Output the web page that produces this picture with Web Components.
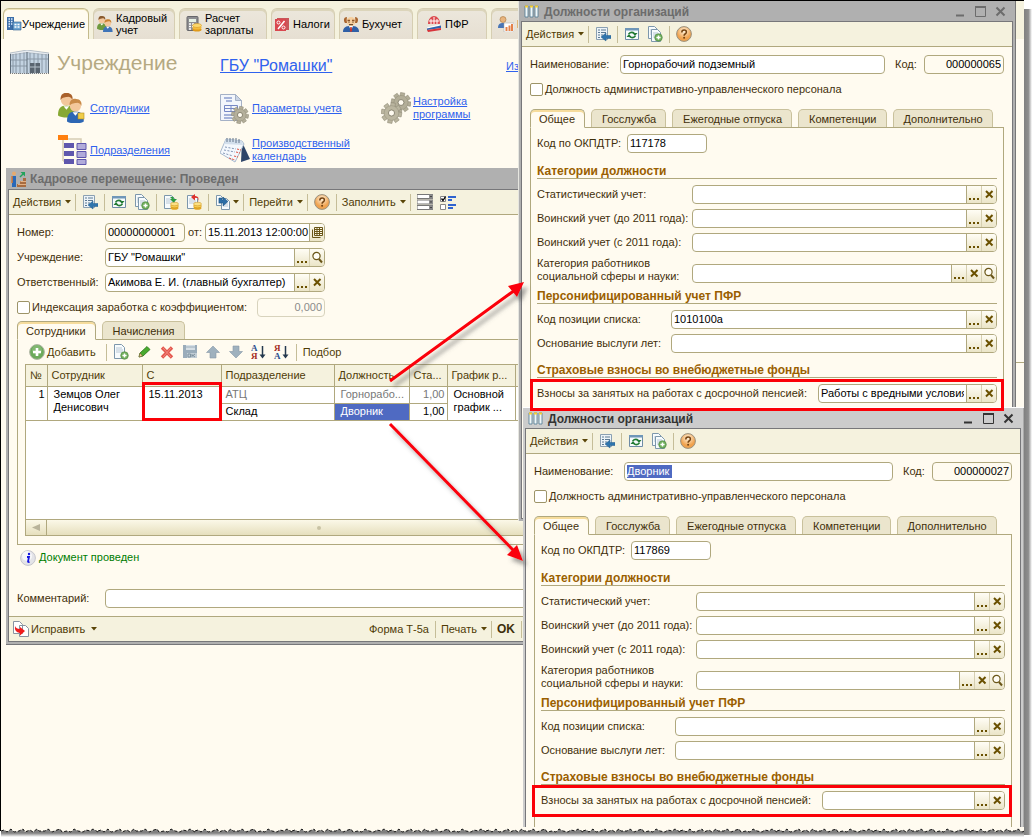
<!DOCTYPE html>
<html lang="ru">
<head>
<meta charset="utf-8">
<title>Кадровое перемещение</title>
<style>
  body { margin: 0; background: #fff; font: 11px/13px "Liberation Sans", Arial, sans-serif; color: #3f2f0a; }
</style>
</head>
<body>
<hr-desktop></hr-desktop>
<script>
const define = (name, css, render, ready) => customElements.define(name, class extends HTMLElement {
  constructor() { super(); this.attachShadow({ mode: 'open' }); }
  connectedCallback() {
    if (this.shadowRoot.firstChild) return;
    const a = (n, d = '') => this.getAttribute(n) ?? d;
    const t = document.createElement('template');
    t.innerHTML = `<style>*{box-sizing:border-box}[hidden]{display:none}${css}</style>${render(a, this)}`;
    this.shadowRoot.append(t.content.cloneNode(true));
    if (ready) ready(this.shadowRoot, this);
  }
});

const gear = (cx, cy, r, fill) => {
  let teeth = '';
  for (let i = 0; i < 8; i++) teeth += `<rect x="${cx - r * .22}" y="${cy - r}" width="${r * .44}" height="${r * .5}" transform="rotate(${i * 45 + 10} ${cx} ${cy})"/>`;
  return `<g fill="${fill}" stroke="#8b8672" stroke-width=".5">${teeth}</g><circle cx="${cx}" cy="${cy}" r="${r * .72}" fill="${fill}" stroke="#8b8672" stroke-width=".4"/><circle cx="${cx}" cy="${cy}" r="${r * .3}" fill="#fffbf0" stroke="#77725f" stroke-width=".8"/>`;
};
const person = (x, y, s, hair, body) => `<g transform="translate(${x} ${y}) scale(${s})"><path d="M0 16c0-5 2-7 6-7s6 2 6 7c-3 2-9 2-12 0z" fill="${body}"/><path d="M4 9.500l2 2.500 2-2.500z" fill="#fff"/><circle cx="6" cy="5" r="4" fill="#f3c79b"/><path d="M1.800 5C1.500 1 4-.5 6.500 0c3 0 4.500 2.500 3.700 5-.6-1.500-1.700-2.300-3-2.300-1.800.4-4 .3-5.400 2.300z" fill="${hair}"/></g>`;
const doc = (x, y, w = 9, h = 12) => `<path d="M${x + .5} ${y + .5}h${w - 3}l3 3v${h - 3}h-${w}z" fill="#f7fbfd" stroke="#7d97ac"/><path d="M${x + 2} ${y + 4}h${w - 4}M${x + 2} ${y + 6}h${w - 3}M${x + 2} ${y + 8}h${w - 3}" stroke="#a9bccb" stroke-width=".8"/>`;
const coins = '<ellipse cx="11.500" cy="14" rx="4" ry="1.800" fill="#e2a623"/><ellipse cx="11.500" cy="12" rx="4" ry="1.800" fill="#f7cf55" stroke="#c98d16" stroke-width=".5"/><ellipse cx="11.500" cy="10" rx="4" ry="1.800" fill="#fbe084" stroke="#c98d16" stroke-width=".5"/>';
const plus = (x, y, r) => `<circle cx="${x}" cy="${y}" r="${r}" fill="#6fae5b" stroke="#4c8440" stroke-width=".6"/><path d="M${x - r * .55} ${y}h${r * 1.1}M${x} ${y - r * .55}v${r * 1.1}" stroke="#fff" stroke-width="${r * .4}"/>`;
const azIcon = (top, bottom, c1, c2) => `<text x="0" y="8" font-size="9" font-weight="bold" font-family="Liberation Serif" fill="${c1}">${top}</text><text x="0" y="16" font-size="9" font-weight="bold" font-family="Liberation Serif" fill="${c2}">${bottom}</text><path d="M11.500 3v10" stroke="#25394f" stroke-width="1.500"/><path d="M8.500 11.500h6l-3 4z" fill="#25394f"/>`;

const ICONS = {
  office: [16, 16, '<path d="M1 1h7v13H1z" fill="#3c6ea8"/><path d="M2.500 3h1.500M5 3h1.500M2.500 5.500h1.500M5 5.500h1.500M2.500 8h1.500M5 8h1.500M2.500 10.500h1.500" stroke="#dff0ff" stroke-width="1.300"/><path d="M7 6h8v8H7z" fill="#6fa6d2" stroke="#2e5c8e" stroke-width=".6"/><path d="M8.500 8.500h2M11.500 8.500h2M8.500 11h2M11.500 11h2" stroke="#fff" stroke-width="1.300"/>'],
  people: [16, 16, person(0, 0, .8, '#8a5a2e', '#6f9a3e') + person(6, 3.2, .8, '#c97f2c', '#3f74b8')],
  calc: [16, 16, '<rect x="1" y=".5" width="11" height="14" rx="1" fill="#8e8e92" stroke="#66666a"/><path d="M3 3h7v3H3z" fill="#e5f1e4"/><path d="M3 8h2M6 8h2M3 10.500h2M6 10.500h2M3 13h2" stroke="#fff" stroke-width="1.300"/><ellipse cx="11" cy="13.500" rx="4.500" ry="2" fill="#e09a1a"/><ellipse cx="11" cy="11.500" rx="4.500" ry="2" fill="#f5bc3a"/><ellipse cx="11" cy="9.500" rx="4.500" ry="2" fill="#fbd86e" stroke="#d18f16" stroke-width=".5"/>'],
  percent: [16, 16, '<rect x="3" y="2" width="12" height="12" fill="#c9565a"/><rect x="1" y="3" width="11" height="12" fill="#d9484f"/><path d="M10.500 5L4 13" stroke="#fff" stroke-width="1.500"/><circle cx="4.500" cy="6.500" r="1.500" fill="none" stroke="#fff"/><circle cx="9.500" cy="11.500" r="1.500" fill="none" stroke="#fff"/>'],
  accountant: [16, 16, '<path d="M0 16c0-5 3-6 8-6s8 1 8 6z" fill="#2f5fa6"/><path d="M6 10l2 5 2-5z" fill="#fff"/><path d="M7.300 11h1.400l.5 4-1.200 1-1.200-1z" fill="#c8342b"/><circle cx="8" cy="5.500" r="4.500" fill="#f6cf9f"/><path d="M2 7c-2-3-1-6 2-6-.5 2-.5 4 0 6zM14 7c2-3 1-6-2-6 .5 2 .5 4 0 6z" fill="#a8642e"/><path d="M4.500 4.500h2.500M9 4.500h2.500" stroke="#8c542a" stroke-width="1.300"/><path d="M5.500 6.200h1M9.500 6.200h1M6 8.700h4" stroke="#4a2c14" stroke-width="1" fill="none"/>'],
  pfr: [16, 16, '<path d="M2 8c0-5 3-8 6-8s6 3 6 8z" fill="#dc4a4f"/><path d="M8 1v7M5 3v5M11 3v5M3 5h10" stroke="#fff" stroke-width="1"/><path d="M1 11l13-3v2L1 13z" fill="#fff" stroke="#d5d5d5" stroke-width=".4"/><path d="M1 12.500l14-3v2.500L1 14z" fill="#2f62ad"/><path d="M1 14l14-2v2L2 16z" fill="#d8333a"/>'],
  report: [16, 16, '<circle cx="5" cy="3.500" r="3" fill="#e8b47e" stroke="#a8763e" stroke-width=".6"/><path d="M0 12c0-4 2-5 5-5s5 1 5 5z" fill="#4a76b6"/><path d="M6 7h10v9H6z" fill="#fff" stroke="#a7a7a7" stroke-width=".5"/><path d="M7.500 11h2v4h-2zM10.500 9.500h2V15h-2zM13 8h2v7h-2z" fill="#e5824b"/>'],
  building: [39, 26, '<path d="M0 3L17 0v24L0 23zM17 0l22 3v20l-22 1z" fill="#c3d3e2"/><path d="M0 3L17 0l22 3v2L17 2.500 0 5z" fill="#e9edf1" stroke="#8d99a5" stroke-width=".5"/><path d="M3 4v19M6 3.500v20M10 3v21M14 2.500V23M20 3v20M24 3v10M28 3.500V13M32 4v19M36 4v19M0 10h17M0 16h17M17 9h22" stroke="#8a98a6" stroke-width="1"/><path d="M17 2v22M38.500 4v19M.5 4v19" stroke="#5f6c79"/><path d="M20 13h10v10H20z" fill="#596470"/><path d="M25 13v10M20 17h10" stroke="#b5c0ca"/><path d="M0 23.500h39" stroke="#7c7c7c" stroke-dasharray="1 1"/>'],
  staff: [28, 30, person(0, 0, 1.4, '#a9602a', '#87a833') + person(9, 6, 1.4, '#c98a48', '#2c66b4') + '<rect x="20" y="20" width="6" height="6" fill="#f0cd48" stroke="#b38d1e" stroke-width=".6"/>'],
  tree: [30, 30, '<path d="M10 4h13v6M5 5v21M5 12h4M5 19h4M5 26h4" fill="none" stroke="#d6cdb4" stroke-width="1.500"/><path d="M0 0h10v5H0z" fill="#ff7f0e"/><path d="M6 8h10v5H6zM6 16h10v5H6zM6 24h10v5H6z" fill="#5f57ad"/><path d="M19 8.500h9v6h-9zM19 16.500h9v6h-9zM19 24.500h9v5h-9z" fill="#b1abda" stroke="#5f57ad"/>'],
  params: [29, 31, '<path d="M.5 1.500h15l6 6v20H.5z" fill="#f3f6fb" stroke="#a5b1c6"/><path d="M15.500 1.500v6h6z" fill="#cbd5e5" stroke="#a5b1c6"/><path d="M4 5h8M6 8h6M4 22h10M4 25h8" stroke="#8d9ed0" stroke-width="1.300"/><path d="M4.500 12.500h13v6h-13zM4.500 15.500h13M11 12.500v6" fill="none" stroke="#7688c5"/>' + gear(20, 22, 8.5, '#b5b09c')],
  calendar: [30, 26, '<path d="M22 5l8 17-9 3z" fill="#2e4568"/><path d="M6 2l16 2 2 3-9 18L0 16z" fill="#f4f8fd" stroke="#a9bacd"/><path d="M6 2l16 2 1 4L4 7z" fill="#d3dfec"/><path d="M7 1v4M10 1v4M13 1v4M16 1v5M19 2v4" stroke="#62748a"/><path d="M5 10l11 2M4 13l11 2M3 16l10 3" stroke="#8497b6" stroke-dasharray="2 1.500"/><path d="M17 12l4 1M16 15l4 1M14 19l4 1M9 21l6 2" stroke="#e1503e" stroke-dasharray="2 1"/>'],
  gears: [30, 32, gear(20, 10.5, 9.8, '#b3ae98') + gear(10.5, 21, 10.2, '#bbb6a0')],
  move: [16, 16, '<circle cx="3" cy="2.500" r="2" fill="#e7aa6e"/><path d="M1 5h4v11H1z" fill="#2868b8"/><path d="M1 5v7" stroke="#d87c37" stroke-width="1.500"/><path d="M6 16v-3h3v-3h3V7h3v9z" fill="#a86c40"/><path d="M7 13.500h8M9.500 10.500H15" stroke="#e2b185"/><path d="M9 6l3-3" stroke="#21a35b" stroke-width="1.500"/><path d="M9.500 1H14v4.500z" fill="#21a35b"/>'],
  catalog: [17, 13, '<path d="M1 1h3v11H1zM6 1h3v11H6zM11 1h3v11h-3z" fill="#f1f7f8" stroke="#4f7a93" stroke-width=".8"/><path d="M1 .5h3v2H1zM6 .5h3v2H6zM11 .5h3v2h-3z" fill="#f5ce34"/>'],
  goto: [16, 16, '<path d="M1.500 1.500h11v12h-11z" fill="#edf4f8" stroke="#8aa0b2"/><path d="M3 4h2M6 4h5M3 6.500h2M6 6.500h5M3 9h2M6 9h2M3 11.500h2" stroke="#5c7a93"/><path d="M16 9.500h-5V7l-5 4 5 4v-2.500h5z" fill="#2f75ad" stroke="#225d8e" stroke-width=".5"/>'],
  refresh: [16, 16, '<path d="M1.500 2.500h13v11h-13z" fill="#f6fafc" stroke="#6e8ba5"/><path d="M1 2h14v2.500H1z" fill="#6f96b8"/><path d="M4.500 8q3-3 6-.5M11.500 10q-3 3-6 .5" fill="none" stroke="#237b35" stroke-width="1.500"/><path d="M13.500 7l-2.500 3-2.500-3zM2.500 11L5 8l2.500 3z" fill="#237b35"/>'],
  copy: [16, 16, doc(1, 0) + doc(4, 3, 9, 12) + plus(11.5, 11.5, 3.8)],
  newdoc: [16, 16, doc(1, 0, 10, 14) + plus(11.5, 11.5, 3.8)],
  post: [16, 16, doc(1, 1, 10, 13) + coins + '<path d="M7 3q4-1 4 2h3L10.500 8.500 7 5h2z" fill="#2a9a3d"/>'],
  unpost: [16, 16, doc(1, 1, 10, 13) + coins + '<path d="M12 8q1-5-3-4v2.500L5 3l4-3v2q5 0 3 6z" fill="#e0312a"/>'],
  based: [16, 16, doc(1, 1, 7, 10) + doc(6, 4, 8, 11) + '<path d="M4 4v5h4v3l5-4.500L8 3v3H7V4z" fill="#2d6ea6" stroke="#174c7d" stroke-width=".5"/>'],
  help: [16, 16, '<defs><radialGradient id="g" cy=".3"><stop offset="0" stop-color="#fff3dd"/><stop offset="1" stop-color="#f0a24e"/></radialGradient></defs><circle cx="8" cy="8" r="7.400" fill="url(#g)" stroke="#99917f"/><path d="M5.800 6.500q0-2.500 2.300-2.500t2.300 2q0 1.200-1.300 2-1 .6-1 1.700" fill="none" stroke="#744312" stroke-width="1.500"/><circle cx="8.100" cy="11.800" r="1" fill="#744312"/>'],
  rows: [16, 16, '<path d="M0 .5h16v4H0zM0 6h16v4H0zM0 11.500h16v4H0z" fill="#fff" stroke="#777"/><path d="M12 .5h4v4h-4zM12 6h4v4h-4zM12 11.500h4v4h-4z" fill="#8d8d8d"/><path d="M13 2h2l-1 1.500zM13 7.500h2L14 9zM13 13h2l-1 1.500z" fill="#222"/>'],
  checks: [16, 16, '<path d="M.5 2.500h5v5h-5zM.5 10.500h5v5h-5z" fill="#fff" stroke="#888"/><path d="M1.500 4.500L3 6.500l2.500-4" fill="none" stroke="#000" stroke-width="1.300"/><path d="M8 3h8M8 6h4M8 11h8M8 14h5" stroke="#2f63cf" stroke-width="2"/>'],
  add: [16, 16, '<circle cx="8" cy="8" r="7.400" fill="#6caa5c" stroke="#b0b6a5"/><circle cx="8" cy="6" r="5" fill="#8fc27f" opacity=".6"/><path d="M4 8h8M8 4v8" stroke="#fff" stroke-width="2.600"/>'],
  pencil: [16, 16, '<path d="M3 13l1-4 7-6.500 3 3L7 12z" fill="#4aab2f" stroke="#27721a" stroke-width=".8"/><path d="M3 13l1-4 2.500 3z" fill="#f1cf95" stroke="#664a22" stroke-width=".5"/>'],
  remove: [16, 16, '<path d="M3 3.500l10 10M13 3.500l-10 10" stroke="#e4574e" stroke-width="3.400"/><path d="M4 4l8 9M12 4l-8 9" stroke="#f08b80" stroke-width="1"/>'],
  save: [16, 16, '<path d="M1 1h14v13H1z" fill="#9aacba"/><path d="M4 1h9v5H4z" fill="#d6dfe5"/><path d="M4 3h9" stroke="#9aacba"/><path d="M5 9h10v5H5z" fill="#c2ced6"/><path d="M6 10h2.500v3H6zM10 10v3M10 11.500h1l2-1.500M11 11.500l2 1.500" fill="none" stroke="#7f929f"/>'],
  up: [16, 16, '<path d="M8 2l6.500 6.500H11V14H5V8.500H1.500z" fill="#9fb1be" stroke="#8799a7" stroke-width=".6"/>'],
  down: [16, 16, '<path d="M8 14L1.500 7.500H5V2h6v5.500h3.500z" fill="#9fb1be" stroke="#8799a7" stroke-width=".6"/>'],
  az: [16, 18, azIcon('А', 'Я', '#2b4f8e', '#a52a22')],
  za: [16, 18, azIcon('Я', 'А', '#a52a22', '#2b4f8e')],
  info: [16, 16, '<circle cx="8" cy="8" r="7.400" fill="#e4e4e8" stroke="#c6c6cc"/><circle cx="7" cy="6" r="5" fill="#fff" opacity=".7"/><path d="M7 7h2l-1 4.500q0 .8 1.500.3" fill="none" stroke="#1515e0" stroke-width="1.800"/><circle cx="9" cy="4" r="1.200" fill="#1515e0"/>'],
  fix: [16, 16, '<path d="M.5.500h6l3 3v9h-9zM6.500 4.500h6l3 3v8h-9z" fill="#fff" stroke="#8893a0"/><path d="M2 5q1 3 5 3V6l5 4-5 4.500V12Q1 11 2 5z" fill="#f01c1c"/>'],
  find: [15, 17, '<circle cx="6.500" cy="7" r="3.600" fill="#fffdf5" stroke="#6a5618" stroke-width="1.200"/><path d="M9 10l3 3.500" stroke="#6a5618" stroke-width="2"/>'],
  cross: [15, 17, '<path d="M4 5l6.500 6.500M10.500 5L4 11.500" stroke="#6a5000" stroke-width="2"/>'],
  dots: [15, 17, '<path d="M2 12h2v2H2zM6 12h2v2H6zM10 12h2v2h-2z" fill="#6a5000"/>'],
  date: [15, 17, '<path d="M4.500 3.500h8v8h-8zM4.500 5.500h8M4.500 7.500h8M4.500 9.500h8M7 3.500v8M9.500 3.500v8" fill="#fffbe8" stroke="#6a5618"/><path d="M2.500 5.500v8h8" fill="none" stroke="#6a5618"/>'],
  min: [12, 12, '<path d="M1 9.500h8" stroke="currentColor" stroke-width="2"/>'],
  max: [12, 12, '<path d="M.5 1h10v9.500H.500z" fill="none" stroke="currentColor"/><path d="M0 1h11" stroke="currentColor" stroke-width="2"/>'],
  close: [12, 12, '<path d="M1.500 1.500l8 8M9.500 1.500l-8 8" stroke="currentColor" stroke-width="2"/>'],
  caret: [7, 4, '<path d="M0 0h6L3 3.500z" fill="#5a4508"/>']
};
define('ui-icon', ':host{display:inline-flex;flex:none}svg{display:block}', a => {
  const [w, h, body] = ICONS[a('name')];
  return `<svg width="${w}" height="${h}" viewBox="0 0 ${w} ${h}" aria-hidden="true">${body}</svg>`;
});

define('main-tab', `
  :host{display:block;flex:none}
  button{width:100%;height:31px;display:flex;align-items:center;gap:3px;padding:0 0 0 var(--pad,3px);border:1px solid #d6ceb2;border-bottom:0;border-radius:6px 6px 0 0;
    background:linear-gradient(#ece7dc,#e6dfd2);font:inherit;line-height:12px;color:#000;text-align:left;box-shadow:inset 0 2px #dcd5bb}
  :host([active]) button{background:#fffbf0;border-color:#c4ba8c;gap:0;box-shadow:inset 0 1px #efe4b8}`,
  a => `<button type="button"><ui-icon name="${a('icon')}"></ui-icon><span><slot></slot></span></button>`);

define('main-tabs', `
  :host{display:flex;gap:4px;height:38px;padding:7px 0 0 2px;background:#f5f2de;overflow:hidden}
  .t1{width:86px;--pad:2px}.t2{width:82px}.t3{width:88px;--pad:6px}.t4{width:64px;--pad:2px}.t5{width:74px}.t6{width:70px;--pad:8px}.t7{width:86px;--pad:6px}`,
  () => `<main-tab class="t1" icon="office" active>Учреждение</main-tab><main-tab class="t2" icon="people">Кадровый<br>учет</main-tab>
  <main-tab class="t3" icon="calc">Расчет<br>зарплаты</main-tab><main-tab class="t4" icon="percent">Налоги</main-tab>
  <main-tab class="t5" icon="accountant">Бухучет</main-tab><main-tab class="t6" icon="pfr">ПФР</main-tab><main-tab class="t7" icon="report">К</main-tab>`);

define('nav-item', `
  :host{display:flex;align-items:center}
  .pic{width:32px;display:flex;flex:none}
  a{color:#2f62ee;text-decoration:underline}`,
  a => `<span class="pic"><ui-icon name="${a('icon')}"></ui-icon></span><a href="#"><slot></slot></a>`);

define('home-page', `
  :host{display:block}
  header{display:flex;align-items:center;padding:0 0 0 9px;height:48px}
  h1{margin:0 0 0 8px;width:163px;font-size:21px;line-height:24px;font-weight:400;color:#b5a982}
  header a{color:#2f62ee}
  .org{font-size:16px;line-height:18px;width:286px;margin-top:6px}
  .more{margin-top:6px}
  nav{display:grid;grid-template-columns:162px 161px 120px;grid-auto-rows:42px;padding:0 0 0 57px}`,
  () => `<header><ui-icon name="building"></ui-icon><h1>Учреждение</h1><a class="org" href="#">ГБУ "Ромашки"</a><a class="more" href="#">Из</a></header>
  <nav><nav-item icon="staff">Сотрудники</nav-item><nav-item icon="params">Параметры учета</nav-item><nav-item icon="gears">Настройка<br>программы</nav-item>
  <nav-item icon="tree">Подразделения</nav-item><nav-item icon="calendar">Производственный<br>календарь</nav-item></nav>`);

define('app-window', `
  :host{display:flex;flex-direction:column;background:#b0b0b0;border-right:1px solid #777;--title:#6c6c6c;color:#3f2f0a}
  :host([active]){background:#ccc;--title:#333;border-right-color:#aaa}
  .title{display:flex;align-items:center;gap:3px;height:var(--title-height,20px);flex:none;padding:1px 8px 0 5px;color:var(--title);font-weight:700}
  h2{flex:1;margin:0;font-size:12px;line-height:14px;white-space:nowrap}
  .ctl{display:flex;gap:8px}
  .ctl button{border:0;background:none;padding:0;color:inherit;display:flex;width:12px}
  .frame{flex:1;display:flex;flex-direction:column;margin:0 2px 2px;border:1px solid #77777a;background:#fffbf0;min-height:0}
  .body{flex:1;min-height:0}`,
  a => `<div class="title"><ui-icon name="${a('icon')}"></ui-icon><h2>${a('heading')}</h2><div class="ctl">
    <button type="button" aria-label="Свернуть"><ui-icon name="min"></ui-icon></button><button type="button" aria-label="Развернуть"><ui-icon name="max"></ui-icon></button><button type="button" aria-label="Закрыть"><ui-icon name="close"></ui-icon></button></div></div>
  <div class="frame"><slot name="bar"></slot><div class="body"><slot></slot></div><slot name="foot"></slot></div>`);

define('tool-bar', `
  :host{display:flex;align-items:center;height:25px;flex:none;padding-left:4px;background:#f5f2de;border-bottom:1px solid #b0a87e}
  :host([plain]){background:none;border:0;height:24px;padding-left:0}
  :host([foot]){border-bottom:0;border-top:1px solid #b0a87e;padding-left:0}`, () => '<slot></slot>');
define('tool-sep', ':host{display:block;flex:none;width:1px;height:17px;margin:0 2px 0 3px;background:#c5bd98}', () => '');
define('tool-button', `
  :host{display:block;flex:none}
  button{display:flex;align-items:center;height:22px;padding:0;border:0;background:none;font:inherit;color:#4f3b06;white-space:nowrap}
  :host([icon]) button{min-width:23px;padding:0 3px 0 4px;gap:2px}
  ui-icon[name=caret]{margin-left:4px}
  :host([hint][menu]) button{padding-right:0;gap:2px}
  :host([hint]) ui-icon[name=caret]{margin-left:0}
  :host([bold]) button{font-size:12px;font-weight:700;color:#3f2f0a}`,
  a => `<button type="button" aria-label="${a('hint')}">${a('icon') ? `<ui-icon name="${a('icon')}"></ui-icon>` : ''}<slot></slot>${a('menu', null) !== null ? '<ui-icon name="caret"></ui-icon>' : ''}</button>`,
  (root, el) => { if (!el.hasAttribute('hint')) root.querySelector('button').removeAttribute('aria-label'); });

define('form-field', `
  :host{display:flex;align-items:center;min-width:0}
  :host([tall]){align-items:flex-end}
  label{flex:none;width:var(--label,auto)}
  .box{flex:1;min-width:0;display:flex;height:19px;border:1px solid #b0a87e;border-radius:4px;background:#fff;overflow:hidden}
  input{flex:1;min-width:0;width:0;border:0;margin:0;padding:0 2px;background:transparent;font:inherit;color:#000;outline:0}
  :host([readonly]) .box{background:#fffbf0}
  :host([disabled]) .box{background:#fffbf0;border-color:#d8d3bd}
  :host([disabled]) input{color:#8b8b8b}
  :host([end]) input{text-align:right}
  :host([selected]) input{color:#fff;background:linear-gradient(#4f6ac2,#4f6ac2) 2px 2px/45px 13px no-repeat}
  :host([snug]) input{padding:0 0 0 2px}
  .box button{flex:none;width:15px;padding:0;border:0;border-left:1px solid #d6cfb0;background:linear-gradient(#fffdf5,#ebe5c8);display:flex;justify-content:center}
  .box button:first-of-type{border-left-color:#b0a87e}`,
  a => `<label for="f" ${a('label') ? '' : 'hidden'}>${a('label')}</label><div class="box"><input id="f" type="text" value='${a('value')}' ${a('label') ? '' : `aria-label="${a('hint', 'Значение')}"`} ${a('disabled', null) !== null ? 'disabled' : ''}>${a('buttons').split(' ').filter(Boolean).map(b => `<button type="button" aria-label="${{ dots: 'Выбрать', cross: 'Очистить', find: 'Открыть', date: 'Календарь' }[b]}"><ui-icon name="${b}"></ui-icon></button>`).join('')}</div>`);

define('check-field', `
  :host{display:flex;align-items:center;gap:2px}
  input{appearance:none;flex:none;width:13px;height:13px;margin:0;border:1px solid #9d9468;border-radius:2px;background:#fff}`,
  a => `<input type="checkbox" id="c"><label for="c">${a('label')}</label>`);

define('tab-panel', `
  :host{display:flex;flex-direction:column}
  .tabs{display:flex;gap:6px}
  button{height:19px;margin-bottom:-1px;padding:1px 9px 0;border:1px solid #c9c19c;border-bottom-color:#b0a87e;border-radius:5px 5px 0 0;background:#ebe5cd;font:inherit;color:#3f2f0a;white-space:nowrap}
  button:not(:first-child){padding-left:10px}
  button:first-child{background:#fffbf0;border-color:#b0a87e;border-bottom-color:#fffbf0;box-shadow:inset 0 2px #f6dc9c;z-index:1;padding:1px 9px 0 8px}
  .page{flex:1;border:1px solid #b0a87e}`,
  a => `<div class="tabs" role="tablist">${a('tabs').split('|').map(t => `<button type="button" role="tab">${t}</button>`).join('')}</div><div class="page" role="tabpanel"><slot></slot></div>`);

define('position-form', `
  :host{display:block;padding:8px 8px 0}
  .top{display:flex;gap:10px}
  .name{flex:1;--label:90px}.code{width:109px;--label:29px}
  check-field{margin:9px 0 13px}
  .page{padding:6px 6px 40px}
  .okpdtr{width:170px;--label:90px}
  h3{margin:11px 0 6px;height:15px;border-bottom:1px solid #b0a87e;font-size:12px;line-height:14px;font-weight:700;color:#9a5f00}
  h3.near{margin-top:6px}
  h3.last{margin-top:10px}
  .rows{display:flex;flex-direction:column;gap:5px;--label:155px}
  .rows.pfr{--label:134px}.rows.fund{--label:281px}`,
  a => `<div class="top"><form-field class="name" label="Наименование:" value="${a('name')}" ${a('marked', null) !== null ? 'selected' : ''}></form-field><form-field class="code" label="Код:" value="${a('code')}" readonly end></form-field></div>
  <check-field label="Должность административно-управленческого персонала"></check-field>
  <tab-panel tabs="Общее|Госслужба|Ежегодные отпуска|Компетенции|Дополнительно"><div class="page">
    <form-field class="okpdtr" label="Код по ОКПДТР:" value="${a('okpdtr')}"></form-field>
    <h3>Категории должности</h3>
    <div class="rows"><form-field label="Статистический учет:" buttons="dots cross"></form-field><form-field label="Воинский учет (до 2011 года):" buttons="dots cross"></form-field><form-field label="Воинский учет (с 2011 года):" buttons="dots cross"></form-field><form-field tall label="Категория работников социальной сферы и науки:" buttons="dots cross find"></form-field></div>
    <h3 class="near">Персонифицированный учет ПФР</h3>
    <div class="rows pfr"><form-field label="Код позиции списка:" value="${a('position')}" buttons="dots cross"></form-field><form-field label="Основание выслуги лет:" buttons="dots cross"></form-field></div>
    <h3 class="last">Страховые взносы во внебюджетные фонды</h3>
    <div class="rows fund"><form-field label="Взносы за занятых на работах с досрочной пенсией:" value="${a('fund')}" buttons="dots cross"></form-field></div>
  </div></tab-panel>`);

define('position-bar', ':host{display:block;flex:none}', () => `<tool-bar><tool-button menu>Действия</tool-button><tool-sep></tool-sep><tool-button icon="goto" hint="Перейти"></tool-button><tool-sep></tool-sep>
  <tool-button icon="refresh" hint="Обновить"></tool-button><tool-button icon="copy" hint="Копировать"></tool-button><tool-sep></tool-sep><tool-button icon="help" hint="Справка"></tool-button></tool-bar>`);

define('staff-table', `
  :host{display:flex;flex-direction:column;border:1px solid #b0a87e;background:#fff}
  .view{flex:1;overflow:hidden}
  table{border-collapse:collapse;table-layout:fixed;width:100%;color:#000}
  .c1{width:21px}.c2{width:95px}.c3{width:79px}.c4{width:113px}.c5{width:75px}.c6{width:38px}.c7{width:68px}
  th,td{border:1px solid #b0a87e;border-top:0;padding:1px 0 0 6px;height:17px;text-align:left;vertical-align:top;font-weight:400;white-space:nowrap;overflow:hidden}
  th{height:21px;padding:0 0 0 4px;vertical-align:middle;background:#f5f2de;color:#4f3b06}
  th:first-child,td.n{border-left:0}
  td.n,td.r{text-align:right;padding:1px 2px 0 0}
  td.u{padding-left:4px}
  .old{color:#777}
  .sel{background:#4f6ac2;color:#fff}
  .scroll{height:16px;display:flex;border-top:1px solid #b0a87e;background:linear-gradient(#fbf8e8,#e6dfbd)}
  .scroll button{width:21px;padding:0;border:0;border-right:1px solid #b0a87e;background:transparent;display:flex;align-items:center;justify-content:center}
  .thumb{flex:1;display:flex;align-items:center;justify-content:center;padding-left:4px}
  .thumb i{width:4px;height:4px;border-radius:2px;background:#c9c3a4}`,
  () => `<div class="view"><table><colgroup><col class="c1"><col class="c2"><col class="c3"><col class="c4"><col class="c5"><col class="c6"><col class="c7"><col></colgroup>
  <thead><tr><th>№</th><th>Сотрудник</th><th>С</th><th>Подразделение</th><th>Должность</th><th>Ста...</th><th>График р...</th><th></th></tr></thead>
  <tbody><tr><td class="n" rowspan="2">1</td><td rowspan="2">Земцов Олег<br>Денисович</td><td rowspan="2">15.11.2013</td><td class="old u">АТЦ</td><td class="old">Горнорабо...</td><td class="r old">1,00</td><td rowspan="2">Основной<br>график ...</td><td rowspan="2"></td></tr>
  <tr><td class="u">Склад</td><td class="sel">Дворник</td><td class="r">1,00</td></tr></tbody></table></div>
  <div class="scroll"><button type="button" aria-label="Влево"><svg width="8" height="8"><path d="M8 0v7L0 3.500z" fill="#b9b39a"/></svg></button><div class="thumb"><i></i></div></div>`);

define('movement-form', `
  :host{display:flex;flex-direction:column;height:100%;padding:8px 0 8px 8px;--label:88px}
  .rows{display:flex;flex-direction:column;gap:6px;width:308px}
  .line{display:flex;align-items:center;gap:3px}
  .num{width:168px}.when{flex:1;--label:0}
  .idx{justify-content:space-between}.idx form-field{width:68px}
  tab-panel{flex:1;margin-top:4px;min-height:0}
  .page{display:flex;flex-direction:column;height:203px;padding:0 0 7px 7px}
  staff-table{flex:1}
  .done{display:flex;align-items:center;gap:3px;margin:5px 0 24px 3px;color:#007d00;height:15px}
  .gap{width:4px}`,
  () => `<div class="rows"><div class="line"><form-field class="num" label="Номер:" value="00000000001" readonly></form-field><span>от:</span><form-field class="when" snug hint="Дата" value="15.11.2013 12:00:00" buttons="date"></form-field></div>
  <form-field label="Учреждение:" value='ГБУ &quot;Ромашки&quot;' buttons="dots find"></form-field>
  <form-field label="Ответственный:" value="Акимова Е. И. (главный бухгалтер)" buttons="dots cross"></form-field>
  <div class="line idx"><check-field label="Индексация заработка с коэффициентом:"></check-field><form-field hint="Коэффициент" value="0,000" disabled end></form-field></div></div>
  <tab-panel tabs="Сотрудники|Начисления"><div class="page"><tool-bar plain><tool-button icon="add">Добавить</tool-button><span class="gap"></span><tool-sep></tool-sep>
  <tool-button icon="newdoc" hint="Копировать"></tool-button><tool-button icon="pencil" hint="Изменить"></tool-button><tool-button icon="remove" hint="Удалить"></tool-button><tool-button icon="save" hint="Завершить"></tool-button><tool-button icon="up" hint="Вверх"></tool-button><tool-button icon="down" hint="Вниз"></tool-button><tool-button icon="az" hint="По возрастанию"></tool-button><tool-button icon="za" hint="По убыванию"></tool-button><tool-sep></tool-sep><span class="gap"></span><tool-button>Подбор</tool-button></tool-bar>
  <staff-table></staff-table></div></tab-panel>
  <div class="done"><ui-icon name="info"></ui-icon>Документ проведен</div>
  <form-field label="Комментарий:"></form-field>`);

define('red-box', ':host{display:block;border:3px solid #fb0007;pointer-events:none}', () => '');

define('torn-edge', `:host{display:block;height:12px}svg{display:block}`,
  () => `<svg width="100%" height="12" aria-hidden="true"><defs>
  <linearGradient id="s" x1="0" y1="0" x2="0" y2="1"><stop offset=".5" stop-color="#808080"/><stop offset="1" stop-color="#fff"/></linearGradient>
  <pattern id="p" width="97" height="12" patternUnits="userSpaceOnUse"><rect y="3" width="97" height="9" fill="#fff"/><rect y="2" width="97" height="8" fill="url(#s)"/>
  <path d="M0 0V4l3-1 3 2 4-3 3 3 5-1 4-2 2 3 5-2 3 2 4-3 2 2 6 0 3-2 4 3 5-2 3-1 2 3 5-1 4 1 3-3 4 2 5 1 3-2 4 1 3-2 5 3V0z" fill="#fffbf0"/>
  <path d="M0 4l3-1 3 2 4-3 3 3 5-1 4-2 2 3 5-2 3 2 4-3 2 2 6 0 3-2 4 3 5-2 3-1 2 3 5-1 4 1 3-3 4 2 5 1 3-2 4 1 3-2 5 3" fill="none" stroke="#111" stroke-dasharray="3 2"/></pattern></defs>
  <rect width="100%" height="12" fill="url(#p)"/></svg>`);

define('hr-desktop', `
  :host{display:block;position:relative;min-height:100vh;background:#fff;overflow:hidden}
  .desk{position:absolute;inset:0 8px 8px 0;border:solid #000;border-width:1px 0 0 1px;background:#fffbf0}
  .rule{position:absolute;right:0;top:361px;width:8px;height:1px;background:#b0a87e}
  .side{position:absolute;right:0;top:9px;bottom:4px;width:8px;background:linear-gradient(to right,#808080,#8e8e8e 55%,#fff)}
  app-window,red-box,torn-edge,.arrows{position:absolute}
  .move{left:6px;right:440px;top:168px;height:477px;border-bottom:1px solid #77777a;--title-height:21px}
  .first{left:519px;right:16px;top:1px;height:520px;box-shadow:-1px 0 #e6e6e0}
  .second{left:523px;right:8px;top:408px;bottom:8px;box-shadow:0 -1px #fff}
  .b1{left:142px;top:382px;width:80px;height:39px}
  .b2{left:530px;right:28px;top:379px;height:32px}
  .b3{left:532px;right:20px;top:785px;height:32px}
  .arrows{left:380px;top:270px}
  torn-edge{left:1px;right:8px;bottom:0}
  .fill{flex:1}.gap{width:3px}.end{width:64px}`,
  () => `<div class="desk"><main-tabs></main-tabs><home-page></home-page><div class="rule"></div></div><div class="side"></div>
  <app-window class="move" icon="move" heading="Кадровое перемещение: Проведен">
    <tool-bar slot="bar"><tool-button menu>Действия</tool-button><tool-sep></tool-sep><tool-button icon="goto" hint="Перейти к списку"></tool-button><tool-sep></tool-sep><tool-button icon="refresh" hint="Обновить"></tool-button><tool-button icon="copy" hint="Копировать"></tool-button><tool-sep></tool-sep><tool-button icon="post" hint="Провести"></tool-button><tool-button icon="unpost" hint="Отменить проведение"></tool-button><tool-sep></tool-sep><tool-button icon="based" menu hint="На основании"></tool-button><tool-sep></tool-sep><span class="gap"></span><tool-button menu>Перейти</tool-button><tool-sep></tool-sep><tool-button icon="help" hint="Справка"></tool-button><tool-sep></tool-sep><span class="gap"></span><tool-button menu>Заполнить</tool-button><tool-sep></tool-sep><tool-button icon="rows" hint="Строки"></tool-button><tool-button icon="checks" hint="Настройка"></tool-button></tool-bar>
    <movement-form></movement-form>
    <tool-bar slot="foot" foot><tool-button icon="fix" menu>Исправить</tool-button><span class="fill"></span><tool-button>Форма Т-5а</tool-button><span class="gap"></span><tool-sep></tool-sep><span class="gap"></span><tool-button menu>Печать</tool-button><tool-sep></tool-sep><span class="gap"></span><tool-button bold>OK</tool-button><span class="gap"></span><tool-sep></tool-sep><span class="end"></span></tool-bar>
  </app-window>
  <app-window class="first" icon="catalog" heading="Должности организаций"><position-bar slot="bar"></position-bar><position-form name="Горнорабочий подземный" code="000000065" okpdtr="117178" position="1010100а" fund="Работы с вредными условиями"></position-form></app-window>
  <app-window class="second" active icon="catalog" heading="Должности организаций"><position-bar slot="bar"></position-bar><position-form name="Дворник" marked code="000000027" okpdtr="117869"></position-form></app-window>
  <red-box class="b1"></red-box><red-box class="b2"></red-box><red-box class="b3"></red-box>
  <svg class="arrows" width="160" height="310" aria-hidden="true"><defs><filter id="sh" x="-10%" y="-10%" width="120%" height="120%"><feDropShadow dx="4" dy="5" stdDeviation="2" flood-color="#555" flood-opacity=".55"/></filter></defs>
    <g filter="url(#sh)" fill="#fb0007" stroke="#fb0007"><path d="M10 111L135 20" stroke-width="3"/><path d="M144 12l-7 15-9-11z" stroke="none"/><path d="M10 154L136 283" stroke-width="3"/><path d="M143 291l-16-6 10-10z" stroke="none"/></g></svg>
  <torn-edge></torn-edge>`);
</script>
</body>
</html>
